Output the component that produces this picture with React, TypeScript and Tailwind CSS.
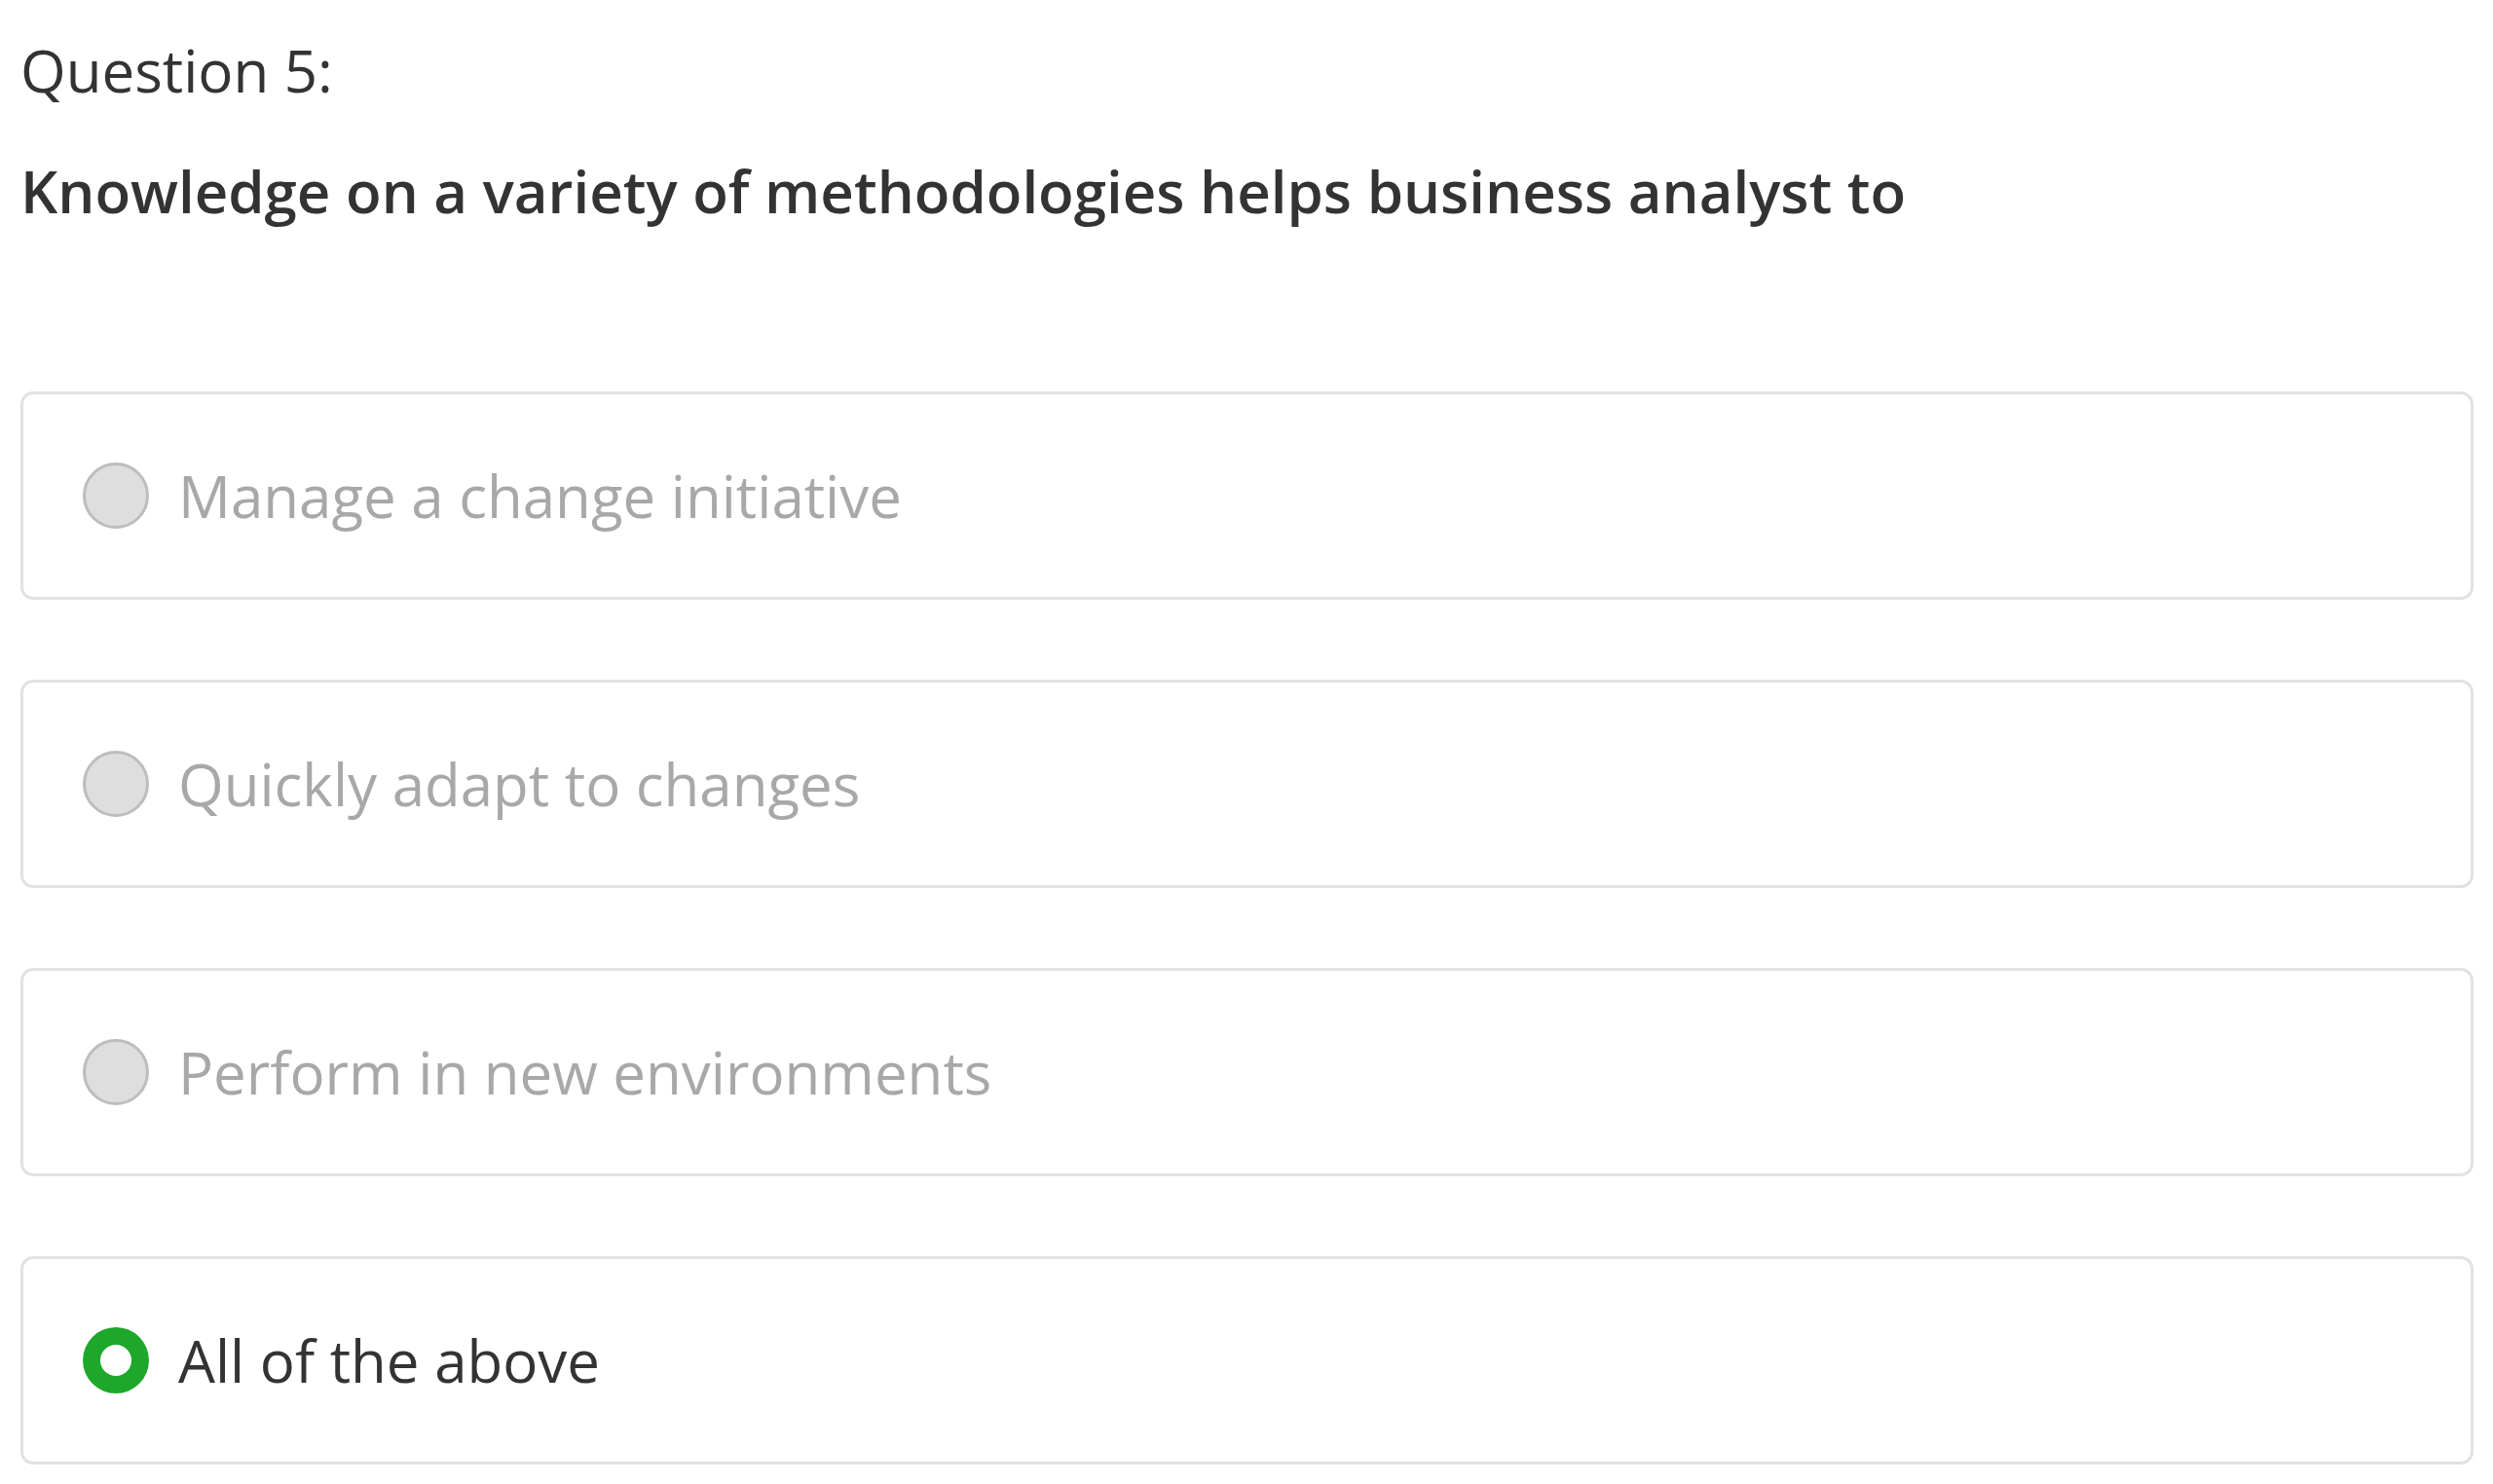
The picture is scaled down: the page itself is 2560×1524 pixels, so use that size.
const options = [
  { label: "Manage a change initiative", selected: false },
  { label: "Quickly adapt to changes", selected: false },
  { label: "Perform in new environments", selected: false },
  { label: "All of the above", selected: true },
];

function Radio({ selected }: { selected: boolean }) {
  if (selected) {
    return (
      <span className="flex h-[68px] w-[68px] shrink-0 items-center justify-center rounded-full bg-[#1ea82b]">
        <span className="h-[32px] w-[32px] rounded-full bg-white" />
      </span>
    );
  }
  return (
    <span className="h-[68px] w-[68px] shrink-0 rounded-full border-[3px] border-[#bdbdbd] bg-[#dedede]" />
  );
}

export default function App() {
  return (
    <div className="min-h-screen bg-white pl-[21px] pr-[20px] pt-[27px] font-['Open_Sans',sans-serif]">
      <h1 className="text-[60px] leading-[90px] font-normal text-[#333333]">Question 5:</h1>
      <p className="mt-[34px] text-[60px] leading-[90px] font-semibold text-[#333333]">
        Knowledge on a variety of methodologies helps business analyst to
      </p>

      <div className="mt-[161px] flex flex-col gap-[82px]">
        {options.map((opt) => (
          <div
            key={opt.label}
            className="flex h-[214px] items-center gap-[30px] rounded-[13px] border-[3px] border-[#e2e2e2] bg-white pl-[61px]"
          >
            <Radio selected={opt.selected} />
            <span
              className={
                opt.selected
                  ? "text-[60px] leading-[90px] text-[#333333]"
                  : "text-[60px] leading-[90px] text-[#a8a8a8]"
              }
            >
              {opt.label}
            </span>
          </div>
        ))}
      </div>
    </div>
  );
}
